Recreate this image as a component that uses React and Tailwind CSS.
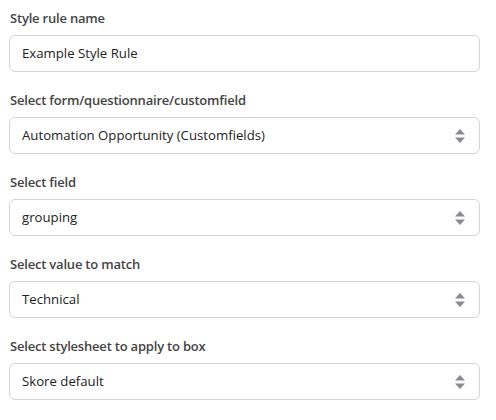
import React from 'react';

const Arrows = () => (
    <svg width="12" height="16" viewBox="0 0 12 16" className="shrink-0">
        <path d="M6 1 L11 6.5 H1 Z" fill="#8a8a92" />
        <path d="M6 15 L11 9.5 H1 Z" fill="#8a8a92" />
    </svg>
);

const Field = ({ label, value, select }) => (
    <div className="flex flex-col">
        <label className="text-[13px] leading-5 font-semibold tracking-[-0.2px] text-[#444] mb-[7px] pl-px">{label}</label>
        <div className="h-[37px] flex items-center justify-between border border-[#d4d4d4] rounded-[6px] bg-white pl-[12px] pr-[13px]">
            <span className="text-[13.2px] text-[#222]">{value}</span>
            {select && <Arrows />}
        </div>
    </div>
);

const App = () => {
    return (
        <div className="min-h-screen bg-white pt-[8px] pl-[9px] pr-[16px] flex flex-col gap-[18px]" style={{ fontFamily: '"Open Sans", sans-serif' }}>
            <Field label="Style rule name" value="Example Style Rule" />
            <Field label="Select form/questionnaire/customfield" value="Automation Opportunity (Customfields)" select />
            <Field label="Select field" value="grouping" select />
            <Field label="Select value to match" value="Technical" select />
            <Field label="Select stylesheet to apply to box" value="Skore default" select />
        </div>
    );
};

export default App;
